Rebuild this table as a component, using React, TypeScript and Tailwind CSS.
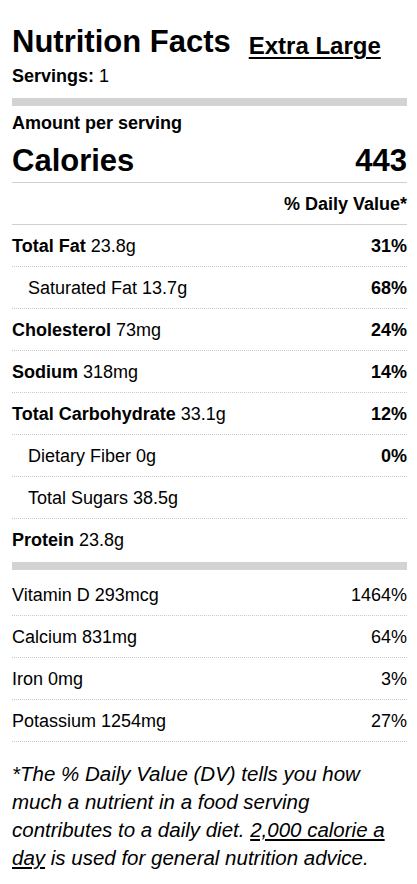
import React from "react";

type Row = { label: string; amount: string; pct?: string; bold?: boolean; indent?: boolean };

const main: Row[] = [
  { label: "Total Fat", amount: "23.8g", pct: "31%", bold: true },
  { label: "Saturated Fat", amount: "13.7g", pct: "68%", indent: true },
  { label: "Cholesterol", amount: "73mg", pct: "24%", bold: true },
  { label: "Sodium", amount: "318mg", pct: "14%", bold: true },
  { label: "Total Carbohydrate", amount: "33.1g", pct: "12%", bold: true },
  { label: "Dietary Fiber", amount: "0g", pct: "0%", indent: true },
  { label: "Total Sugars", amount: "38.5g", indent: true },
];

const vit: Row[] = [
  { label: "Vitamin D", amount: "293mcg", pct: "1464%" },
  { label: "Calcium", amount: "831mg", pct: "64%" },
  { label: "Iron", amount: "0mg", pct: "3%" },
  { label: "Potassium", amount: "1254mg", pct: "27%" },
];

export default function App() {
  return (
    <div className="min-h-screen bg-white text-black font-['Liberation_Sans',Arial,Helvetica,sans-serif] pl-3 pr-[10px] pt-[24px]">
      <div className="flex items-baseline">
        <h1 className="text-[31px] leading-[35px] font-bold">Nutrition Facts</h1>
        <span className="ml-[18px] text-[24px] leading-[35px] font-bold underline decoration-2 underline-offset-[3px] translate-y-[2px]">
          Extra Large
        </span>
      </div>
      <div className="mt-[5px] text-[18px] leading-[21px]">
        <span className="font-bold">Servings:</span> 1
      </div>
      <div className="mt-[11px] h-[8px] bg-[#d3d3d3]" />
      <div className="mt-[7px] text-[18px] leading-[21px] font-bold">Amount per serving</div>
      <div className="flex justify-between items-baseline pt-[9px] pb-[3px] border-b border-[#cfcfcf] text-[31px] leading-[36px] font-bold">
        <span>Calories</span>
        <span>443</span>
      </div>
      <div className="flex justify-end pt-[11px] pb-[9px] border-b border-[#cfcfcf] text-[18px] leading-[21px] font-bold">
        % Daily Value*
      </div>
      {main.map((r) => (
        <div
          key={r.label}
          className="flex justify-between pt-[11px] pb-[9px] border-b border-dotted border-[#c8c8c8] text-[18px] leading-[21px]"
        >
          <span className={r.indent ? "pl-4" : ""}>
            <span className={r.bold ? "font-bold" : ""}>{r.label}</span> {r.amount}
          </span>
          <span className="font-bold">{r.pct}</span>
        </div>
      ))}
      <div className="flex justify-between pt-[11px] pb-[9px] text-[18px] leading-[21px]">
        <span>
          <span className="font-bold">Protein</span> 23.8g
        </span>
      </div>
      <div className="mt-[2px] h-[8px] bg-[#d3d3d3]" />
      {vit.map((r, i) => (
        <div
          key={r.label}
          className={
            (i === 0 ? "pt-[15px] " : "pt-[11px] ") +
            "flex justify-between pb-[9px] border-b border-dotted border-[#c8c8c8] text-[18px] leading-[21px]"
          }
        >
          <span>
            {r.label} {r.amount}
          </span>
          <span>{r.pct}</span>
        </div>
      ))}
      <p className="mt-[18px] text-[20.5px] leading-[28px] italic">
        *The % Daily Value (DV) tells you how much a nutrient in a food serving contributes to a daily diet.{" "}
        <span className="underline">2,000 calorie a day</span> is used for general nutrition advice.
      </p>
    </div>
  );
}
